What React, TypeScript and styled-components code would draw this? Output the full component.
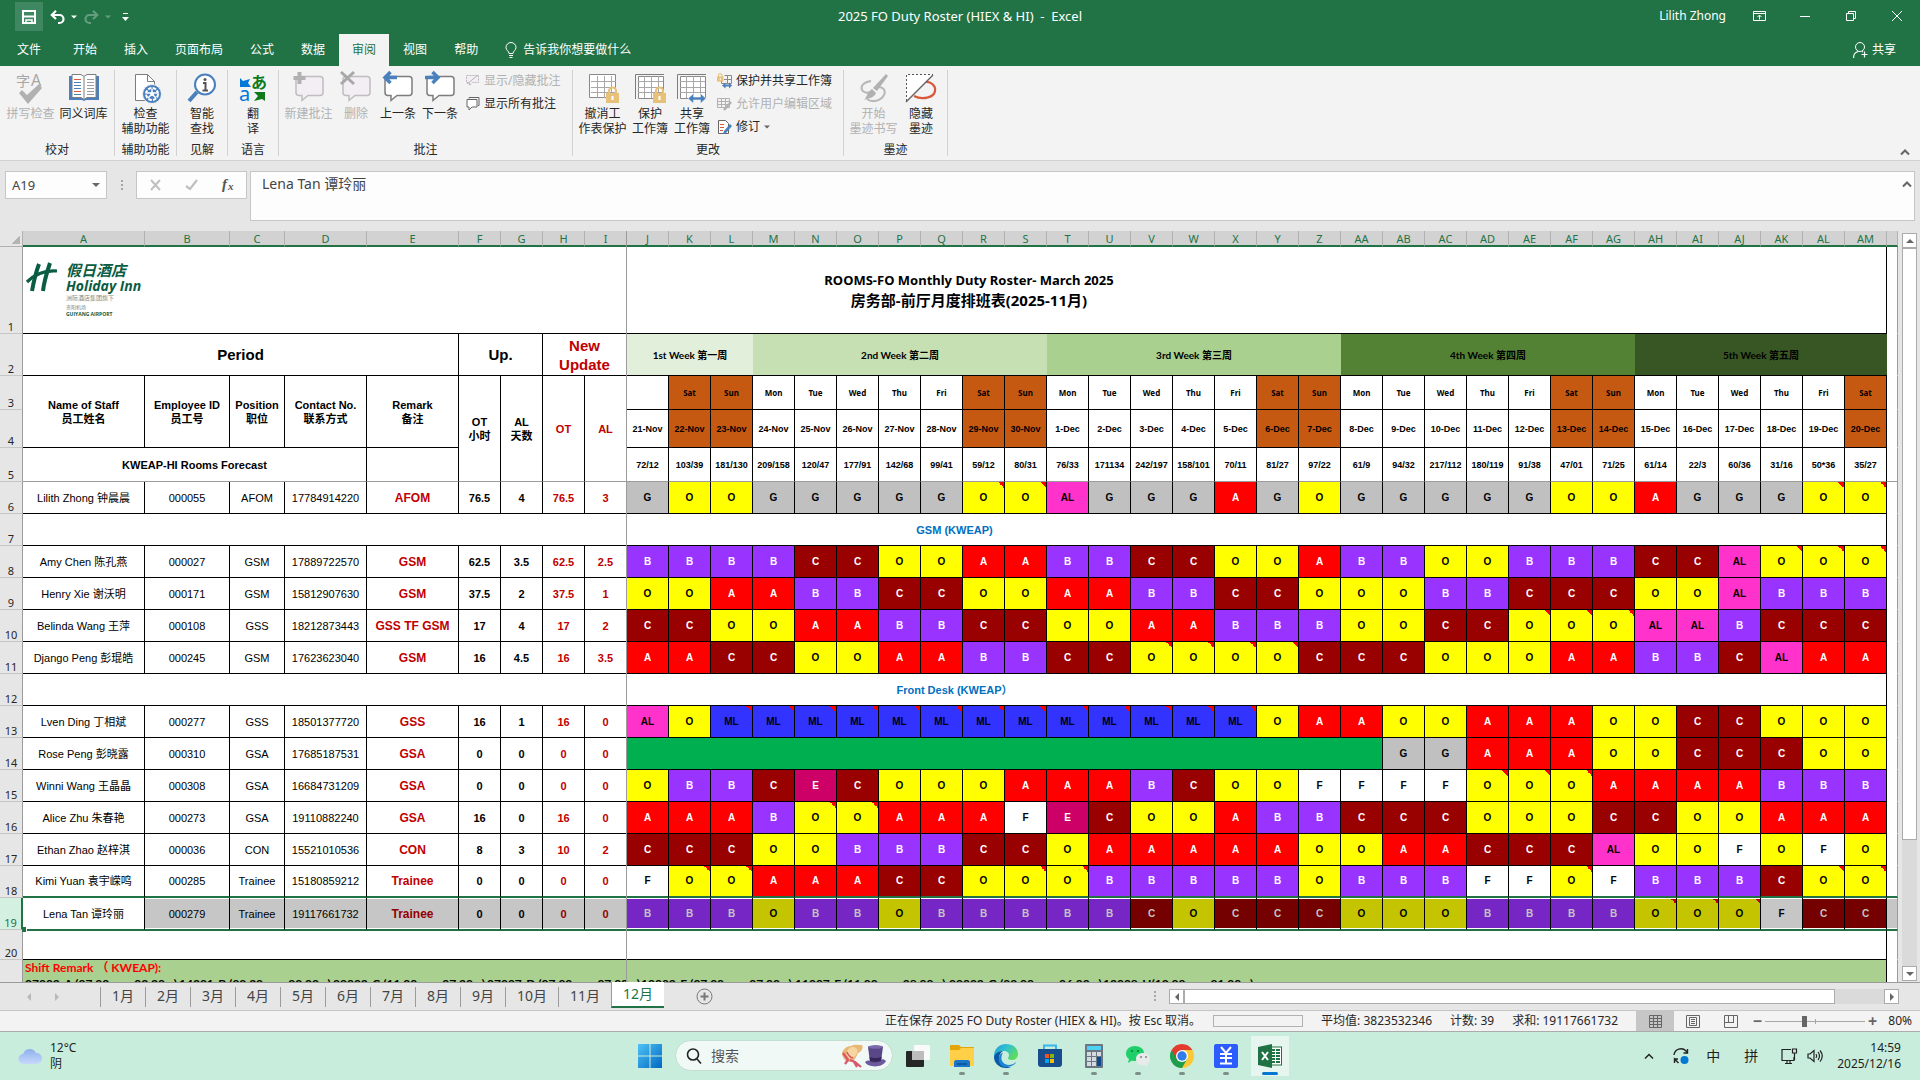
import React from "react";
import styled, { createGlobalStyle, css } from "styled-components";

const UI = `"Noto Sans", "Noto Sans CJK SC", sans-serif`;
const ARIAL = `"Liberation Sans", "Noto Sans CJK SC", sans-serif`;
const LATO = `Lato, "Noto Sans CJK SC", sans-serif`;
const GREEN = "#217346";

const Global = createGlobalStyle`
  *, *::before, *::after { box-sizing: border-box; }
  body { margin: 0; background: #e6e6e6; overflow: hidden; }
  button, input, textarea { font: inherit; color: inherit; margin: 0; padding: 0; border: 0; background: none; border-radius: 0; outline: none; }
  svg { display: block; flex: none; overflow: visible; }
`;

const Window = styled.div`
  height: 100vh;
  display: flex;
  flex-direction: column;
  font: 12px/16px ${UI};
  color: #262626;
`;

/* ---------- title bar ---------- */
const TitleBar = styled.header`
  display: grid;
  grid-template-columns: 1fr auto 1fr;
  align-items: center;
  height: 31px;
  flex: none;
  background: ${GREEN};
  color: #fff;
`;
const QuickAccess = styled.div`
  display: flex;
  align-items: center;
  padding: 2px 0 0 15px;
`;
const QuickButton = styled.button<{ $w: number; $on?: boolean; $dim?: boolean }>`
  width: ${(p) => p.$w}px;
  height: 29px;
  display: flex;
  align-items: center;
  justify-content: center;
  background: ${(p) => (p.$on ? "#3f8760" : "none")};
  opacity: ${(p) => (p.$dim ? 0.3 : 1)};
`;
const Title = styled.h1`
  margin: 0;
  font-size: 13px;
  font-weight: 400;
  white-space: pre;
`;
const WindowControls = styled.div`
  display: flex;
  justify-content: flex-end;
  align-items: center;
`;
const UserName = styled.span`
  margin-right: 10px;
`;
const CaptionButton = styled.button`
  width: 46px;
  height: 30px;
  display: flex;
  align-items: center;
  justify-content: center;
`;

/* ---------- ribbon tabs ---------- */
const TabRow = styled.nav`
  display: flex;
  align-items: flex-end;
  gap: 1px;
  height: 35px;
  flex: none;
  background: ${GREEN};
  color: #fff;
  padding-right: 24px;
`;
const Tab = styled.button<{ $active?: boolean; $first?: boolean }>`
  height: 32px;
  padding: ${(p) => (p.$first ? "0 18px 0 17px" : "0 13px")};
  background: ${(p) => (p.$active ? "#f3f3f3" : "none")};
  color: ${(p) => (p.$active ? GREEN : "#fff")};
`;
const TellMe = styled.button`
  display: flex;
  align-items: center;
  gap: 6px;
  height: 32px;
  padding-left: 13px;
`;
const Share = styled(TellMe)`
  margin-left: auto;
  gap: 4px;
`;

/* ---------- ribbon ---------- */
const Ribbon = styled.section`
  display: flex;
  height: 95px;
  flex: none;
  padding: 4px 0;
  background: #f3f3f3;
  border-bottom: 1px solid #d2d2d2;
`;
const Group = styled.div<{ $w: number }>`
  width: ${(p) => p.$w}px;
  display: flex;
  flex-direction: column;
  border-right: 1px solid #d2d2d2;
  padding-top: 2px;
`;
const GroupItems = styled.div<{ $left?: boolean }>`
  display: flex;
  justify-content: ${(p) => (p.$left ? "flex-start" : "center")};
  padding-left: ${(p) => (p.$left ? 3 : 0)}px;
`;
const GroupLabel = styled.div`
  margin-top: auto;
  text-align: center;
  line-height: 12px;
`;
const BigButton = styled.button<{ $w: number; $off?: boolean }>`
  width: ${(p) => p.$w}px;
  display: flex;
  flex-direction: column;
  align-items: center;
  justify-content: flex-start;
  gap: 2px;
  line-height: 15px;
  white-space: pre;
  color: ${(p) => (p.$off ? "#b1b1b1" : "#262626")};
`;
const SmallStack = styled.div`
  display: flex;
  flex-direction: column;
  padding: 0 0 0 4px;
  margin-top: -3px;
`;
const SmallButton = styled.button<{ $off?: boolean }>`
  display: flex;
  align-items: center;
  gap: 4px;
  height: 23px;
  white-space: nowrap;
  color: ${(p) => (p.$off ? "#b1b1b1" : "#262626")};
`;
const CollapseButton = styled.button`
  margin: auto 8px 0 auto;
  padding: 0 2px 0;
`;

/* ---------- formula bar ---------- */
const FormulaRow = styled.div`
  display: flex;
  flex: none;
  height: 70px;
  padding: 10px 5px 10px;
`;
const Boxed = styled.div<{ $w: number }>`
  width: ${(p) => p.$w}px;
  height: 28px;
  display: flex;
  align-items: center;
  background: #fdfdfd;
  border: 1px solid #c6c6c6;
  color: #444;
`;
const NameInput = styled.input`
  flex: 1;
  min-width: 0;
  padding-left: 6px;
  font-size: 13px;
`;
const NameDrop = styled.button`
  width: 14px;
`;
const Dots = styled.div`
  width: 29px;
  height: 28px;
  display: flex;
  align-items: center;
  justify-content: center;
`;
const FxButton = styled.button`
  flex: 1;
  display: flex;
  align-items: center;
  justify-content: center;
`;
const FormulaBox = styled.div`
  flex: 1;
  display: flex;
  height: 50px;
  margin-left: 3px;
  background: #fdfdfd;
  border: 1px solid #c6c6c6;
`;
const FormulaInput = styled.textarea`
  flex: 1;
  resize: none;
  padding: 3px 11px;
  font-size: 14px;
  line-height: 18px;
  color: #444;
  overflow: hidden;
`;
const FormulaToggle = styled.button`
  align-self: flex-start;
  padding: 8px 2px;
`;

/* ---------- sheet ---------- */
const SheetArea = styled.main`
  flex: 1;
  min-height: 0;
  display: flex;
`;
const SheetView = styled.div`
  flex: 1;
  min-width: 0;
  overflow: hidden;
  position: relative;
  background: #fff;
`;
const FreezeLine = styled.div`
  position: absolute;
  top: 0;
  bottom: 0;
  left: 626px;
  width: 1px;
  background: #9b9b9b;
`;
const Grid = styled.table`
  width: 100%;
  table-layout: fixed;
  border-collapse: separate;
  border-spacing: 0;
  font: 11px/14px ${ARIAL};
  color: #000;
  text-align: center;
`;
const Row = styled.tr<{ $h: number }>`
  height: ${(p) => p.$h}px;
`;
const ColHead = styled.th`
  height: 16px;
  padding: 0;
  font: 11px/13px ${UI};
  color: ${GREEN};
  background: #d2d2d2;
  border-right: 1px solid #b1b1b1;
  border-bottom: 2px solid ${GREEN};
`;
const Corner = styled.th`
  padding: 0;
  background: linear-gradient(to bottom right, transparent 50%, #b4b4b4 50%) 11px 4px / 9px 9px no-repeat #e6e6e6;
  border-right: 1px solid #b1b1b1;
  border-bottom: 1px solid #b1b1b1;
`;
const RowHead = styled.th<{ $on?: boolean }>`
  padding: 0;
  font: 11px/13px ${UI};
  vertical-align: bottom;
  color: ${(p) => (p.$on ? GREEN : "#262626")};
  background: ${(p) => (p.$on ? "#d3f0e0" : "#e6e6e6")};
  border-right: ${(p) => (p.$on ? `2px solid ${GREEN}` : "1px solid #9b9b9b")};
  border-bottom: 1px solid #c6c6c6;
`;

type CellProps = {
  $bg?: string;
  $fg?: string;
  $size?: number;
  $bold?: boolean;
  $note?: boolean;
  $line?: string;
  $lineW?: number;
  $open?: boolean;
  $picked?: boolean;
  $under?: boolean;
  $font?: string;
};
const Cell = styled.td<CellProps>`
  padding: 0;
  overflow: hidden;
  white-space: pre;
  border-right: 1px solid #000;
  border-bottom: ${(p) => p.$lineW || 1}px solid ${(p) => p.$line || "#000"};
  background-color: ${(p) => p.$bg || "#fff"};
  color: ${(p) => p.$fg || "#000"};
  font-weight: ${(p) => (p.$bold ? 700 : 400)};
  font-size: ${(p) => p.$size || 11}px;
  ${(p) => p.$font && css`font-family: ${p.$font};`}
  ${(p) => p.$open && css`border-right: 0;`}
  ${(p) => p.$under && css`border-top: 1px solid ${GREEN};`}
  ${(p) => p.$picked && css`box-shadow: inset 0 1px #fff, inset 0 -1px #fff;`}
  ${(p) =>
    p.$note &&
    css`
      background-image: linear-gradient(to bottom left, ${p.$picked ? "#c40000" : "#f00"} 50%, transparent 50%);
      background-position: top right;
      background-size: 6px 6px;
      background-repeat: no-repeat;
    `}
`;
const Filler = styled(Cell)`
  border-right: 1px solid #9b9b9b;
  border-bottom-color: ${(p) => p.$line || "transparent"};
`;
const BigHead = styled.div`
  font-size: 15px;
  line-height: 19px;
  white-space: normal;
`;
const Banner = styled.div`
  display: grid;
  grid-template-columns: 1fr auto 1fr;
  align-items: center;
  padding-left: 29px;
  height: 86px;
`;
const BannerTitle = styled.div`
  font: 700 13px/20px ${UI};
`;
const BannerSub = styled.div`
  font: 700 15px/20px ${UI};
`;
const Logo = styled.div`
  display: flex;
  gap: 8px;
  margin-left: -26px;
  color: #0a5c43;
  text-align: left;
`;
const LogoWords = styled.div`
  display: flex;
  flex-direction: column;
`;
const LogoLine = styled.span<{ $s: number; $lh: number; $grey?: boolean; $italic?: boolean; $bold?: boolean }>`
  font-family: "Open Sans", "Noto Sans CJK SC", sans-serif;
  font-size: ${(p) => p.$s}px;
  line-height: ${(p) => p.$lh}px;
  font-weight: ${(p) => (p.$bold ? 700 : 400)};
  font-style: ${(p) => (p.$italic ? "italic" : "normal")};
  color: ${(p) => (p.$grey ? "#7d8a86" : "inherit")};
`;
const Remark = styled.div`
  height: 60px;
  padding-left: 2px;
  text-align: left;
  font: 700 12px/16px ${LATO};
`;
const RemarkTitle = styled.div`
  color: #f00;
`;
const RemarkLine = styled.div`
  display: flex;
`;
const RemarkItem = styled.span`
  flex: 0 0 154px;
`;
const NameCell = styled(Cell)`
  position: relative;
  overflow: visible;
`;
const FillHandle = styled.span`
  position: absolute;
  left: -1px;
  bottom: -3px;
  width: 5px;
  height: 5px;
  background: ${GREEN};
  border-right: 1px solid #fff;
`;

/* ---------- scrollbars ---------- */
const VScroll = styled.div`
  width: 22px;
  display: flex;
  flex-direction: column;
  padding: 2px 3px 1px 4px;
`;
const HScroll = styled.div`
  flex: 0 0 730px;
  display: flex;
  height: 15px;
  margin-right: 21px;
`;
const ArrowButton = styled.button`
  flex: 0 0 15px;
  display: flex;
  align-items: center;
  justify-content: center;
  background: #fff;
  border: 1px solid #ababab;
`;
const Thumb = styled.div<{ $grow: number }>`
  flex: ${(p) => p.$grow} 1 0;
  background: #fff;
  border: 1px solid #ababab;
`;
const Track = styled.div<{ $grow: number }>`
  flex: ${(p) => p.$grow} 1 0;
  background: #dadada;
`;

/* ---------- sheet tabs ---------- */
const SheetTabs = styled.nav`
  display: flex;
  align-items: center;
  flex: none;
  height: 28px;
  border-top: 1px solid #9b9b9b;
  color: #444;
`;
const TabArrows = styled.div`
  width: 100px;
  display: flex;
  gap: 20px;
  padding-left: 25px;
`;
const SheetTab = styled.button<{ $wide?: boolean }>`
  width: ${(p) => (p.$wide ? 53 : 45)}px;
  height: 20px;
  padding-bottom: 3px;
  font-size: 14px;
  line-height: 17px;
  border-left: 1px solid #9b9b9b;
`;
const ActiveTab = styled(SheetTab)`
  height: 26px;
  margin: -4px 0 0;
  padding-bottom: 0;
  background: #fff;
  color: ${GREEN};
  border-bottom: 2px solid ${GREEN};
`;
const AddSheet = styled.button`
  margin-left: 32px;
`;
const Spacer = styled.div`
  flex: 1;
`;

/* ---------- status bar ---------- */
const StatusBar = styled.footer`
  display: flex;
  align-items: center;
  justify-content: flex-end;
  flex: none;
  height: 22px;
  background: #f3f3f3;
  border-top: 1px solid #c6c6c6;
  border-bottom: 1px solid #ababab;
  white-space: pre;
  padding-right: 8px;
`;
const Progress = styled.div`
  width: 90px;
  height: 12px;
  margin: 0 18px 0 12px;
  border: 1px solid #b1b1b1;
`;
const Stat = styled.span`
  margin-right: 18px;
`;
const ViewButton = styled.button<{ $on?: boolean }>`
  width: 38px;
  height: 20px;
  display: flex;
  align-items: center;
  justify-content: center;
  background: ${(p) => (p.$on ? "#c6c6c6" : "none")};
`;
const ZoomSign = styled.button`
  width: 15px;
  font-size: 16px;
  font-weight: 700;
  color: #666;
`;
const ZoomRange = styled.input`
  appearance: none;
  width: 100px;
  height: 13px;
  background: linear-gradient(#a6a6a6, #a6a6a6) center / 100% 1px no-repeat, linear-gradient(#a6a6a6, #a6a6a6) center / 1px 5px no-repeat;
  &::-webkit-slider-thumb {
    appearance: none;
    width: 5px;
    height: 11px;
    background: #666;
  }
`;
const ZoomLabel = styled.span`
  width: 32px;
  text-align: right;
`;

/* ---------- taskbar ---------- */
const Taskbar = styled.footer`
  display: grid;
  grid-template-columns: 1fr auto 1fr;
  align-items: center;
  flex: none;
  height: 48px;
  padding-bottom: 1px;
  background: #c9eddc;
  color: #1f1f1f;
`;
const Weather = styled.button`
  display: flex;
  align-items: center;
  gap: 7px;
  padding-left: 18px;
  text-align: left;
  justify-self: start;
`;
const Apps = styled.div`
  display: flex;
  align-items: center;
`;
const AppButton = styled.button<{ $running?: boolean; $front?: boolean }>`
  width: 44px;
  height: 47px;
  display: flex;
  align-items: center;
  justify-content: center;
  position: relative;
  ${(p) =>
    p.$front &&
    css`
      background: linear-gradient(#e6f6ee, #e6f6ee) center / 38px 40px no-repeat;
    `}
  ${(p) =>
    (p.$running || p.$front) &&
    css`
      &::after {
        content: "";
        position: absolute;
        left: 50%;
        bottom: 4px;
        width: ${p.$front ? 16 : 6}px;
        height: 3px;
        border-radius: 2px;
        transform: translateX(-50%);
        background: ${p.$front ? "#0078d4" : "#7f908a"};
      }
    `}
`;
const Search = styled.label`
  width: 218px;
  height: 31px;
  margin: 0 3px;
  padding: 0 5px 0 10px;
  display: flex;
  align-items: center;
  gap: 9px;
  background: #f0f9f5;
  border: 1px solid #c3ddd0;
  border-radius: 16px;
`;
const SearchInput = styled.input`
  flex: 1;
  min-width: 0;
  font-size: 14px;
  &::placeholder {
    color: #555;
    opacity: 1;
  }
`;
const Tray = styled.div`
  display: flex;
  align-items: center;
  justify-content: flex-end;
  padding-right: 19px;
`;
const TrayButton = styled.button<{ $w: number }>`
  width: ${(p) => p.$w}px;
  height: 30px;
  display: flex;
  align-items: center;
  justify-content: center;
  font-size: 14px;
`;
const Clock = styled.button`
  text-align: right;
  margin-left: 12px;
`;

/* ---------- data ---------- */
const columns = [
  ..."ABCDEFGHIJKLMNOPQRSTUVWXYZ".split(""),
  ..."ABCDEFGHIJKLM".split("").map((c) => "A" + c),
];
const leadWidths = [122, 85, 55, 82, 92, 42, 42, 42, 42];

const weeks: [string, number, string][] = [
  ["1st Week 第一周", 3, "#e2efda"],
  ["2nd Week 第二周", 7, "#c6e0b4"],
  ["3rd Week 第三周", 7, "#a9d08e"],
  ["4th Week 第四周", 7, "#548235"],
  ["5th Week 第五周", 6, "#375623"],
];
const weekDays = ["Fri", "Sat", "Sun", "Mon", "Tue", "Wed", "Thu"];
const days = Array.from({ length: 30 }, (_, i) => ({
  day: i === 0 ? "" : weekDays[i % 7],
  date: i < 10 ? `${21 + i}-Nov` : `${i - 9}-Dec`,
  weekend: i % 7 === 1 || i % 7 === 2,
}));
const forecast =
  "72/12 103/39 181/130 209/158 120/47 177/91 142/68 99/41 59/12 80/31 76/33 171134 242/197 158/101 70/11 81/27 97/22 61/9 94/32 217/112 180/119 91/38 47/01 71/25 61/14 22/3 60/36 31/16 50*36 35/27".split(" ");

type Staff = { row: number; info: string[]; shifts: string; leave?: number };
type Section = { row: number; section: string };
const roster: (Staff | Section)[] = [
  { row: 6, info: ["Lilith Zhong 钟晨晨", "000055", "AFOM", "17784914220", "AFOM", "76.5", "4", "76.5", "3"],
    shifts: "G O O G G G G G O* O* AL G G G A G O G G G G G O O A G G G O* O*" },
  { row: 7, section: "GSM (KWEAP)" },
  { row: 8, info: ["Amy Chen 陈孔燕", "000027", "GSM", "17889722570", "GSM", "62.5", "3.5", "62.5", "2.5"],
    shifts: "B B B B C C O O A A B B C C O O A B B O O B B B C C AL O* O* O*" },
  { row: 9, info: ["Henry Xie 谢沃明", "000171", "GSM", "15812907630", "GSM", "37.5", "2", "37.5", "1"],
    shifts: "O O A A B B C C O O A A B B C C O O O B B C C C O O AL B B B" },
  { row: 10, info: ["Belinda Wang 王萍", "000108", "GSS", "18212873443", "GSS TF GSM", "17", "4", "17", "2"],
    shifts: "C C O O A A B B C C O O A A B B B O O C C O* O* O* AL AL B C C C" },
  { row: 11, info: ["Django Peng 彭琨皓", "000245", "GSM", "17623623040", "GSM", "16", "4.5", "16", "3.5"],
    shifts: "A A C C O O A A B B C C O* O* O* O* C C C O O O A A B B C AL A A" },
  { row: 12, section: "Front Desk (KWEAP）" },
  { row: 13, info: ["Lven Ding 丁相斌", "000277", "GSS", "18501377720", "GSS", "16", "1", "16", "0"],
    shifts: "AL O ML* ML* ML* ML* ML* ML* ML* ML* ML* ML* ML* ML* ML* O A A O O A A A O O C C O O O" },
  { row: 14, info: ["Rose Peng 彭晓露", "000310", "GSA", "17685187531", "GSA", "0", "0", "0", "0"], leave: 18,
    shifts: "G G A A A O O C C C O O" },
  { row: 15, info: ["Winni Wang 王晶晶", "000308", "GSA", "16684731209", "GSA", "0", "0", "0", "0"],
    shifts: "O B B C E C O O O A A A B C O O F F F F O* O* O* A A A A B B B" },
  { row: 16, info: ["Alice Zhu 朱春艳", "000273", "GSA", "19110882240", "GSA", "16", "0", "16", "0"],
    shifts: "A A A B O* O* A A A F E C O O A B B C C C O O O C C O O A A A" },
  { row: 17, info: ["Ethan Zhao 赵梓淇", "000036", "CON", "15521010536", "CON", "8", "3", "10", "2"],
    shifts: "C C C O O B B B C C O A A A A A O O A A C C C AL O O F O F O" },
  { row: 18, info: ["Kimi Yuan 袁宇嵘鸣", "000285", "Trainee", "15180859212", "Trainee", "0", "0", "0", "0"],
    shifts: "F O* O* A A A C C O O* O* B B B B B O B B B F F O* F B B B C O* O*" },
  { row: 19, info: ["Lena Tan 谭玲丽", "000279", "Trainee", "19117661732", "Trainee", "0", "0", "0", "0"],
    shifts: "B B B O B B O B B B B B C O C C C O O O B B B B O* O* O* F C C" },
];
const shiftColors: Record<string, [string, string, string, string]> = {
  G: ["#c0c0c0", "#000", "#939393", "#000"],
  O: ["#ffff00", "#000", "#c4c400", "#000"],
  B: ["#9933ff", "#fff", "#7526c4", "#c4c4c4"],
  C: ["#990000", "#fff", "#740000", "#c4c4c4"],
  A: ["#ff0000", "#fff", "#c40000", "#c4c4c4"],
  E: ["#cc0066", "#fff", "#9c004e", "#c4c4c4"],
  F: ["#ffffff", "#000", "#c6c6c6", "#000"],
  AL: ["#ff33cc", "#000", "#c4279d", "#000"],
  ML: ["#3333ff", "#000", "#2727c4", "#000"],
};
const remarks = ["07003-A (07.00", "14301-B (02.30", "22003-C (11.00", "07007-D (07.00", "10003-E (07.00", "11007-F (11.00", "22003-G (22.00", "13008-H(12.00"];
const remarkEnds = ["03.30", "22.00", "07.30", "07.00", "07.00", "08.00", "06.00", "21.00"];

/* ---------- icons ---------- */
const Tri = ({ d, c = "#666", s = 8 }: { d: "up" | "down" | "left" | "right"; c?: string; s?: number }) => {
  const pts = { up: "0,6 8,6 4,2", down: "0,2 8,2 4,6", left: "6,0 6,8 2,4", right: "2,0 2,8 6,4" }[d];
  return <svg width={s} height={s} viewBox="0 0 8 8"><polygon points={pts} fill={c} /></svg>;
};
const ChevronUp = ({ c = "#666", w = 2 }: { c?: string; w?: number }) => (
  <svg width="10" height="8" viewBox="0 0 10 8"><path d="M1 6.500 5 2.500 9 6.500" fill="none" stroke={c} strokeWidth={w} /></svg>
);
const SaveIcon = () => (
  <svg width="14" height="16" viewBox="0 0 14 16" fill="none" stroke="#fff" strokeWidth="2"><path d="M1 2h12v12H1z" /><path d="M1 7.500h12" /><path d="M4 15v-4h6v4" strokeWidth="1.500" /><path d="M6 13v2" strokeWidth="1.500" /></svg>
);
const UndoIcon = ({ flip }: { flip?: boolean }) => (
  <svg width="15" height="14" viewBox="0 0 15 14" fill="none" stroke="#fff" strokeWidth="2.200" transform={flip ? "scale(-1 1)" : undefined}><path d="M6 .8 1.800 5 6 9M2 5h7.500a4 4 0 0 1 0 8H8" /></svg>
);
const SpellIcon = () => (
  <svg width="32" height="32" viewBox="0 0 32 32" fill="#a6a6a6"><text x="1" y="14" fontSize="14" fontFamily="Noto Sans CJK SC">字</text><text x="16" y="14" fontSize="16" fontFamily="Noto Sans">A</text><path d="m4 21 3-3 5 5L24 12l3 4-14 16z" fill="#b1b1b1" /></svg>
);
const ThesaurusIcon = () => (
  <svg width="32" height="32" viewBox="0 0 32 32" fill="none"><path d="M1 4h3v21h12 12V4h3v24H18l-2 1-2-1H1z" fill="#4a80bd" /><path d="M4 2.500h9l3 2 3-2h9v23h-9l-3 2-3-2H4z" fill="#fff" stroke="#7d7d7d" /><path d="M16 5v22" stroke="#7d7d7d" /><path d="M6 7.500h7M6 19.500h7" stroke="#d8583a" /><path d="M6 10.500h7M6 13.500h7M6 16.500h7M6 22.500h7" stroke="#4a80bd" /><path d="M19 7.500h7M19 10.500h7M19 13.500h7M19 16.500h7M19 19.500h7M19 22.500h7" stroke="#9b9b9b" /></svg>
);
const AccessIcon = () => (
  <svg width="32" height="32" viewBox="0 0 32 32" fill="none"><path d="M5.500 2.500h12l7 7v19h-19z" fill="#fff" stroke="#7d7d7d" /><path d="M17.500 2.500v7h7" stroke="#7d7d7d" /><circle cx="22" cy="22" r="9.500" fill="#4a80bd" stroke="#f3f3f3" /><circle cx="22" cy="22" r="6" stroke="#fff" strokeWidth="2" strokeDasharray="3.500 1.200" /><path d="M22 17v3M22 22l-4 4M22 22l4 4M17 21h10" stroke="#fff" strokeWidth="1.500" /><circle cx="22" cy="22" r="2" fill="#fff" /></svg>
);
const SmartIcon = () => (
  <svg width="32" height="32" viewBox="0 0 32 32" fill="none"><path d="M3 29 11 20" stroke="#4a80bd" strokeWidth="4" /><circle cx="19" cy="12.500" r="10" fill="#fff" stroke="#4a80bd" strokeWidth="2" /><circle cx="19" cy="7.500" r="1.500" fill="#555" /><path d="M17 11h2.500v7M16.500 18.500h5.500" stroke="#555" strokeWidth="2" /></svg>
);
const TranslateIcon = () => (
  <svg width="32" height="32" viewBox="0 0 32 32"><text x="14" y="16" fontSize="16" fontWeight="700" fill="#0e7a1a" fontFamily="Noto Sans CJK SC">あ</text><text x="2" y="29" fontSize="20" fill="#0078d7" fontFamily="Noto Sans">a</text><path d="M3 6v9h11l-3-4 2-4-7 2z" fill="#0078d7" /><path d="M28 29v-9H17l4 4-4 5 8-2z" fill="#0e7a1a" /></svg>
);
const CommentIcon = ({ mark }: { mark: "plus" | "x" | "left" | "right" }) => {
  const off = mark === "plus" || mark === "x";
  return (
    <svg width="32" height="32" viewBox="0 0 32 32" fill="none">
      <path d="M6 4.500h21a3 3 0 0 1 3 3v13a3 3 0 0 1-3 3H15l-6 5v-5H6a3 3 0 0 1-3-3v-13a3 3 0 0 1 3-3z" fill={off ? "#f3eef3" : "#fff"} stroke={off ? "#c0bcc0" : "#7d7d7d"} strokeWidth="1.500" />
      {mark === "plus" && <path d="M6.500 0v12M.5 6h12" stroke="#b1b1b1" strokeWidth="4" />}
      {mark === "x" && <path d="m1 0 13 12M14 0 1 12" stroke="#a8a8a8" strokeWidth="3" />}
      {mark === "left" && <path d="M8.500 0 3 5.500 8.500 11M3 5.500h12" stroke="#4a80bd" strokeWidth="3.500" />}
      {mark === "right" && <path d="M8.500 0 14 5.500 8.500 11M1 5.500h12" stroke="#4a80bd" strokeWidth="3.500" />}
    </svg>
  );
};
const NoteSmall = ({ off }: { off?: boolean }) => (
  <svg width="15" height="15" viewBox="0 0 15 15" fill="none" stroke={off ? "#b8b4b8" : "#666"}>
    {off ? <><path d="M1.500 2.500h12v7h-6l-3 3v-3h-3z" strokeDasharray="2 1" fill="#f3eef3" /><path d="m2 11 11-9" /></> : <><path d="M4 2.500V1.500h10v8h-1" /><path d="M2 3.500h10v7.500H7l-3 3v-3H2z" fill="#fff" /></>}
  </svg>
);
const Lock = ({ x, y, s = 1 }: { x: number; y: number; s?: number }) => (
  <g transform={`translate(${x} ${y}) scale(${s})`}><path d="M3 8V5a3.500 3.500 0 0 1 7 0v3" fill="none" stroke="#e8c178" strokeWidth="2.200" /><rect x="0" y="7" width="13" height="10" fill="#e8c178" /><path d="M6.500 10v4" stroke="#fff" strokeWidth="2" /></g>
);
const SheetIcon = ({ kind }: { kind: "sheet" | "book" | "share" }) => (
  <svg width="32" height="32" viewBox="0 0 32 32" fill="none">
    {kind !== "sheet" && <path d="M1.500 27V2.500H30" stroke="#7d7d7d" />}
    <path d={kind === "sheet" ? "M2.500 2.500h26v23h-26z" : "M4.500 4.500h25v22h-25z"} fill="#fff" stroke="#8a8a8a" /><path d="M10.500 4v22M17.500 4v22M24.500 4v22M4 9.500h25M4 15.500h25M4 20.500h25" stroke="#a8a8a8" />
    {kind === "share" ? <path d="M12 26.500l5.500-5v3.500h7v-3.500l5.500 5-5.500 5V28h-7v3.500z" fill="#4a80bd" stroke="#f3f3f3" strokeWidth=".6" /> : <Lock x={19} y={14} />}
  </svg>
);
const ProtectShareIcon = () => (
  <svg width="15" height="16" viewBox="0 0 15 16" fill="none"><path d="M7.500 2.500h7v8h-10v-3M10.500 2v8M7 6.500h7.500" stroke="#8a8a8a" /><Lock x={0} y={0} s={0.5} /><path d="M5 12.500l3.500-3v2H12v-2l3 3-3 3v-2H8.500v2z" fill="#4a80bd" /></svg>
);
const RangeIcon = () => (
  <svg width="15" height="16" viewBox="0 0 15 16" fill="none" stroke="#b1b1b1"><path d="M.5 2.500h12v9H.5zM4.500 2v9M8.500 2v9M0 5.500h13M0 8.500h13" /><path d="m7 14 7-8" strokeWidth="2.500" /></svg>
);
const TrackIcon = () => (
  <svg width="15" height="16" viewBox="0 0 15 16" fill="none"><path d="M1.500 1.500h7l3 3v10h-10z" fill="#fff" stroke="#666" /><path d="M3 5.500h4M3 8.500h4M3 11.500h3" stroke="#d8583a" /><path d="m6 15 1-3 6-7 2 2-6 7z" fill="#4a80bd" /></svg>
);
const InkIcon = () => (
  <svg width="32" height="32" viewBox="0 0 32 32" fill="none"><path d="M13 9C6 10 2 14 4 18c2 3 6 3 9 2M20 15c6 0 8 4 6 8-3 6-12 8-17 4" stroke="#b8b8b8" strokeWidth="2" /><path d="m28 2 2 2-11 15-4-3z" fill="#b1b1b1" /><path d="m14 17 4 4c-2 5-7 5-12 7 3-3 3-8 8-11z" fill="#b1b1b1" /></svg>
);
const HideInkIcon = () => (
  <svg width="32" height="32" viewBox="0 0 32 32" fill="none"><path d="M20 10c6-1 11 4 10 9-1 7-13 9-21 5" stroke="#d8583a" strokeWidth="2.200" /><path d="M1.500 29V2.500H28z" fill="#fff" /><path d="M1.500 29V2.500H28" stroke="#555" strokeDasharray="2 2" /><path d="M1 30 28 3" stroke="#666" strokeWidth="1.500" /></svg>
);
const Win = () => (
  <svg width="24" height="24" viewBox="0 0 24 24"><defs><linearGradient id="win" x1="0" y1="0" x2="1" y2="1"><stop offset="0" stopColor="#4fc3f7" /><stop offset="1" stopColor="#0067c0" /></linearGradient></defs><path d="M0 0h11.500v11.500H0zM12.500 0H24v11.500H12.500zM0 12.500h11.500V24H0zM12.500 12.500H24V24H12.500z" fill="url(#win)" /></svg>
);
const HatsIcon = () => (
  <svg width="46" height="26" viewBox="0 0 46 26" fill="none"><path d="M2 14c-3-5 2-11 8-11 3-2 8-1 11-1 2 3-1 7-4 8-2 4-3 8-8 9-3 0-6-2-7-5z" fill="#e9b877" /><path d="M6 12c-1-6 5-10 9-7 3 2 1 7-2 9-3 1-6 1-7-2z" fill="#f6d6a0" /><path d="M2 10l5 7-3 4M9 17l5 2 6 5M13 19l3 5" stroke="#d9556b" strokeWidth="2.200" /><path d="M6 9c1 3 3 5 6 6" stroke="#d9556b" strokeWidth="1.500" /><path d="M24 19c3 6 18 6 21-1-2-2-4-2-5-1l-11 1c-1-1-4 0-5 1z" fill="#6d5a9e" /><path d="M27 4c3-2 13-2 15 0l-2 14c-2 2-9 2-11 1z" fill="#5a4788" /><ellipse cx="34.500" cy="4" rx="7.500" ry="1.800" fill="#7a68ac" /><path d="m28.500 14 .6 4c3 1 8.500 1 11-.6l.6-4c-3 2-8.500 2-12.200.6z" fill="#352659" /></svg>
);
const TaskViewIcon = () => (
  <svg width="24" height="24" viewBox="0 0 24 24"><rect x="8" y="1" width="16" height="15" rx="1" fill="#fafafa" /><rect x="0" y="7" width="18" height="16" rx="1" fill="#262626" /><rect x="6" y="7" width="12" height="9" fill="#bdbdbd" /></svg>
);
const FolderIcon = () => (
  <svg width="24" height="24" viewBox="0 0 24 24"><path d="M0 2c0-1 .5-1 1-1h8l2 2H23c1 0 1 .5 1 1v17H0z" fill="#e5a50a" /><path d="M0 6h9l2-2h13v18H0z" fill="#ffcf48" /><path d="M4 23v-5c0-1 1-2 2-2h12c1 0 2 1 2 2v5z" fill="#1976c8" /><path d="M7 20h10" stroke="#0b4f94" strokeWidth="1.500" /></svg>
);
const EdgeIcon = () => (
  <svg width="24" height="24" viewBox="0 0 24 24"><defs><linearGradient id="edge" x1="0" y1="0" x2="1" y2=".6"><stop offset="0" stopColor="#2196d8" /><stop offset=".5" stopColor="#30c3d0" /><stop offset="1" stopColor="#5fdc5a" /></linearGradient></defs><path d="M0 12C0 5 5 0 12 0s12 4 12 10c0 4-3 6-6 6-3 0-4-1-4-2s1-1 1-3c0-2-2-4-5-4-5 0-9 3-10 8z" fill="url(#edge)" /><path d="M0 13c1-4 5-6 9-6-2 1-4 4-4 7 0 6 5 9 10 9h2c-2 1-4 1-5 1C5 24 0 19 0 13z" fill="#0c59a4" /><path d="M9 9c-3 4-2 11 5 12 4 0 6-1 8-3 0 2-5 5-9 5C6 23 4 18 5 14c0-3 2-5 4-5z" fill="#1a86d4" /></svg>
);
const StoreIcon = () => (
  <svg width="24" height="24" viewBox="0 0 24 24" fill="none"><path d="M6 7V1.500h12V7" stroke="#36b8ee" strokeWidth="2" /><path d="M0 5h24v15c0 2-1 3-3 3H3c-2 0-3-1-3-3z" fill="#174d8c" /><path d="M7 10h4v4H7z" fill="#f25022" /><path d="M12 10h4v4h-4z" fill="#7fba00" /><path d="M7 15h4v4H7z" fill="#00a4ef" /><path d="M12 15h4v4h-4z" fill="#ffb900" /></svg>
);
const CalcIcon = () => (
  <svg width="18" height="24" viewBox="0 0 18 24"><rect width="18" height="24" rx="1" fill="#6b7680" /><rect x="2" y="2" width="14" height="4" fill="#4dd2f5" /><path d="M2 8h4v4H2zM7 8h4v4H7zM12 8h4v4h-4zM2 13h4v4H2zM7 13h4v4H7zM2 18h4v4H2zM7 18h4v4H7z" fill="#d3dae0" /><path d="M12 13h4v9h-4z" fill="#0c4a8f" /></svg>
);
const WeChatIcon = () => (
  <svg width="24" height="24" viewBox="0 0 24 24"><path d="M9 2c5 0 9 3 9 7s-4 8-9 8c-1 0-2 0-3-.5L2 19l1-4C1 14 0 12 0 9.500 0 5 4 2 9 2z" fill="#1fd06a" /><path d="M17 9c4 0 7 3 7 6 0 2-1 4-3 5l1 3-3-2c-5 1-9-2-9-6s3-6 7-6z" fill="#e9ebea" /><circle cx="6" cy="7" r="1.100" fill="#0b7c3c" /><circle cx="12" cy="7" r="1.100" fill="#0b7c3c" /><circle cx="15" cy="13" r="1" fill="#7e8583" /><circle cx="20" cy="13" r="1" fill="#7e8583" /></svg>
);
const ChromeIcon = () => (
  <svg width="24" height="24" viewBox="0 0 24 24"><path d="M12 12 1.600 6A12 12 0 0 1 22.400 6z" fill="#e33b2e" /><path d="M12 12 22.400 6A12 12 0 0 1 12 24z" fill="#fcc934" /><path d="M12 12 12 24A12 12 0 0 1 1.600 6z" fill="#1e9e4a" /><path d="M12 6h10.400L17 15z" fill="#fcc934" /><path d="M6.800 15 1.600 6 12 6z" fill="#e33b2e" /><path d="m6.800 15 10.400 0L12 24z" fill="#1e9e4a" /><circle cx="12" cy="12" r="6" fill="#fff" /><circle cx="12" cy="12" r="4.700" fill="#2f7de9" /></svg>
);
const YenIcon = () => (
  <svg width="24" height="24" viewBox="0 0 24 24" fill="none" stroke="#fff" strokeWidth="2"><rect width="24" height="24" rx="2" fill="#2c5cff" stroke="none" /><path d="m7 3 5 6 5-6M6 10h12M6 14h12M12 9v11M6 19.500h12" /></svg>
);
const ExcelIcon = () => (
  <svg width="24" height="24" viewBox="0 0 24 24"><rect x="11" y="3" width="12.500" height="18" fill="#fff" stroke="#1f7244" /><path d="M14 6h3M18 6h4M14 9h3M18 9h4M14 12h3M18 12h4M14 15h3M18 15h4M14 18h3M18 18h4" stroke="#1f7244" strokeWidth="2" /><path d="M0 3 14 0v24L0 21z" fill="#1f7244" /><path d="m4 8 6 8M10 8l-6 8" stroke="#fff" strokeWidth="2" /></svg>
);
const LogoMark = () => (
  <svg width="32" height="30" viewBox="0 0 32 30" fill="none" stroke="#0a5c43"><path d="M13 2C10 10 8 18 6 29M24 1c-3 9-6 18-7 28" strokeWidth="4" /><path d="M1 20c8-8 18-12 30-11" strokeWidth="3.200" /></svg>
);

/* ---------- roster rows ---------- */
const StaffRow = ({ s }: { s: Staff }) => {
  const picked = s.row === 19;
  const line = picked || s.row === 18 ? GREEN : undefined;
  const lineW = s.row === 18 ? 2 : 1;
  return (
    <Row $h={32}>
      <RowHead scope="row" $on={picked}>{s.row}</RowHead>
      {s.info.map((t, i) => {
        const shared = { $line: line, $lineW: lineW, $picked: picked };
        if (i === 0)
          return (
            <NameCell key={i} {...shared}>
              {t}
              {picked && <FillHandle />}
            </NameCell>
          );
        const red = i === 4 || i > 6;
        return (
          <Cell key={i} {...shared} $bg={picked ? "#c6c6c6" : undefined} $bold={i > 3} $size={i === 4 ? 12 : 11} $fg={red ? (picked ? "#940000" : "#c00000") : undefined}>
            {t}
          </Cell>
        );
      })}
      {s.leave && <Cell colSpan={s.leave} $bg="#00b050" />}
      {s.shifts.split(" ").map((code, i) => {
        const k = code.replace("*", "");
        const c = shiftColors[k];
        return (
          <Cell key={i} $bold $size={10} $line={line} $lineW={lineW} $picked={picked} $note={code.endsWith("*")} $bg={picked ? c[2] : c[0]} $fg={picked ? c[3] : c[1]}>
            {k}
          </Cell>
        );
      })}
      <Filler $line={line} $lineW={lineW} $picked={picked} $bg={picked ? "#c6c6c6" : undefined} />
    </Row>
  );
};

const Sheet = () => (
  <SheetView>
    <Grid>
      <colgroup>
        <col width={23} />
        {leadWidths.map((w, i) => <col key={i} width={w} />)}
        {days.map((_, i) => <col key={i} width={42} />)}
        <col />
      </colgroup>
      <thead>
        <tr>
          <Corner />
          {columns.map((c) => <ColHead key={c} scope="col">{c}</ColHead>)}
          <ColHead />
        </tr>
      </thead>
      <tbody>
        <Row $h={87}>
          <RowHead scope="row">1</RowHead>
          <Cell colSpan={39}>
            <Banner>
              <Logo>
                <LogoMark />
                <LogoWords>
                  <LogoLine $s={15} $lh={16} $bold $italic>假日酒店</LogoLine>
                  <LogoLine $s={14} $lh={16} $bold $italic>Holiday Inn</LogoLine>
                  <LogoLine $s={6} $lh={9} $grey>洲际酒店集团旗下</LogoLine>
                  <LogoLine $s={5} $lh={8} $grey>贵阳机场</LogoLine>
                  <LogoLine $s={5} $lh={7} $bold>GUIYANG AIRPORT</LogoLine>
                </LogoWords>
              </Logo>
              <div>
                <BannerTitle>ROOMS-FO Monthly Duty Roster- March 2025</BannerTitle>
                <BannerSub>房务部-前厅月度排班表(2025-11月)</BannerSub>
              </div>
            </Banner>
          </Cell>
          <Filler />
        </Row>
        <Row $h={42}>
          <RowHead scope="row">2</RowHead>
          <Cell colSpan={5} $bold><BigHead>Period</BigHead></Cell>
          <Cell colSpan={2} $bold><BigHead>Up.</BigHead></Cell>
          <Cell colSpan={2} $bold $fg="#c00000"><BigHead>New Update</BigHead></Cell>
          {weeks.map(([t, n, bg]) => <Cell key={t} colSpan={n} $bg={bg} $bold $open $size={10} $font={LATO}>{t}</Cell>)}
          <Filler />
        </Row>
        <Row $h={34}>
          <RowHead scope="row">3</RowHead>
          {["Name of Staff\n员工姓名", "Employee ID\n员工号", "Position\n职位", "Contact No.\n联系方式", "Remark\n备注"].map((t) => (
            <Cell key={t} rowSpan={2} $bold>{t}</Cell>
          ))}
          {["OT\n小时", "AL\n天数"].map((t) => <Cell key={t} rowSpan={3} $bold $line="#9b9b9b">{t}</Cell>)}
          {["OT", "AL"].map((t) => <Cell key={t} rowSpan={3} $bold $fg="#c00000" $line="#9b9b9b">{t}</Cell>)}
          {days.map((d, i) => <Cell key={i} $bold $size={8} $font={UI} $bg={d.weekend ? "#c65911" : undefined}>{d.day}</Cell>)}
          <Filler />
        </Row>
        <Row $h={38}>
          <RowHead scope="row">4</RowHead>
          {days.map((d, i) => <Cell key={i} $bold $size={9} $bg={d.weekend ? "#c65911" : undefined}>{d.date}</Cell>)}
          <Filler />
        </Row>
        <Row $h={34}>
          <RowHead scope="row">5</RowHead>
          <Cell colSpan={4} $bold $line="#9b9b9b">KWEAP-HI Rooms Forecast</Cell>
          <Cell $line="#9b9b9b" />
          {forecast.map((t, i) => <Cell key={i} $bold $size={9} $line="#9b9b9b">{t}</Cell>)}
          <Filler $line="#9b9b9b" />
        </Row>
        {roster.map((r) =>
          "section" in r ? (
            <Row key={r.row} $h={32}>
              <RowHead scope="row">{r.row}</RowHead>
              <Cell colSpan={39} $bold $fg="#0070c0">{r.section}</Cell>
              <Filler />
            </Row>
          ) : (
            <StaffRow key={r.row} s={r} />
          )
        )}
        <Row $h={30}>
          <RowHead scope="row">20</RowHead>
          <Cell colSpan={39} $under />
          <Filler $under />
        </Row>
        <tr>
          <RowHead />
          <Cell colSpan={39} $bg="#a9d08e">
            <Remark>
              <RemarkTitle>Shift Remark （ KWEAP):</RemarkTitle>
              <RemarkLine>
                {remarks.map((t, i) => <RemarkItem key={i}>{`${t}  ---  ${remarkEnds[i]}   )`}</RemarkItem>)}
              </RemarkLine>
            </Remark>
          </Cell>
          <Filler />
        </tr>
      </tbody>
    </Grid>
    <FreezeLine />
  </SheetView>
);

const months = Array.from({ length: 11 }, (_, i) => i + 1);

export default function App() {
  return (
    <Window>
      <Global />
      <TitleBar>
        <QuickAccess>
          <QuickButton $w={28} $on aria-label="保存"><SaveIcon /></QuickButton>
          <QuickButton $w={28} aria-label="撤消"><UndoIcon /></QuickButton>
          <QuickButton $w={6} aria-label="撤消列表"><Tri d="down" c="#fff" s={6} /></QuickButton>
          <QuickButton $w={28} $dim aria-label="恢复"><UndoIcon flip /></QuickButton>
          <QuickButton $w={6} $dim aria-label="恢复列表"><Tri d="down" c="#fff" s={6} /></QuickButton>
          <QuickButton $w={28} aria-label="自定义">
            <svg width="7" height="8" viewBox="0 0 7 8"><path d="M1 .5h5" stroke="#fff" /><path d="M0 4h7L3.500 8z" fill="#fff" /></svg>
          </QuickButton>
        </QuickAccess>
        <Title>2025 FO Duty Roster (HIEX &amp; HI)  -  Excel</Title>
        <WindowControls>
          <UserName>Lilith Zhong</UserName>
          <CaptionButton aria-label="功能区显示选项"><svg width="13" height="10" viewBox="0 0 13 10" fill="none" stroke="#fff"><path d="M.5.5h12v9H.5zM0 2.500h13M6.500 8.500v-4M4.500 6l2-2 2 2" /></svg></CaptionButton>
          <CaptionButton aria-label="最小化"><svg width="10" height="10" viewBox="0 0 10 10" stroke="#fff"><path d="M0 5.500h10" /></svg></CaptionButton>
          <CaptionButton aria-label="还原"><svg width="10" height="10" viewBox="0 0 10 10" fill="none" stroke="#fff"><path d="M.5 2.500h7v7h-7zM2.500 2.500v-2h7v7h-2" /></svg></CaptionButton>
          <CaptionButton aria-label="关闭"><svg width="10" height="10" viewBox="0 0 10 10" stroke="#fff"><path d="m0 0 10 10M10 0 0 10" /></svg></CaptionButton>
        </WindowControls>
      </TitleBar>
      <TabRow>
        {["文件", "开始", "插入", "页面布局", "公式", "数据", "审阅", "视图", "帮助"].map((t, i) => (
          <Tab key={t} $active={t === "审阅"} $first={i === 0}>{t}</Tab>
        ))}
        <TellMe>
          <svg width="12" height="16" viewBox="0 0 12 16" fill="none" stroke="#fff"><path d="M4 11.500C4 9 1 8.500 1 5.500a5 5 0 0 1 10 0c0 3-3 3.500-3 6zM4 13.500h4M4.500 15.500h3" /></svg>
          告诉我你想要做什么
        </TellMe>
        <Share>
          <svg width="15" height="16" viewBox="0 0 15 16" fill="none" stroke="#fff"><circle cx="7" cy="5" r="4.500" /><path d="M.5 16c0-4 2-6 5-6.500M9 9.500l1 .5M11.500 9.500v6M8.500 12.500h6" strokeWidth="1.200" /></svg>
          共享
        </Share>
      </TabRow>
      <Ribbon>
        <Group $w={115}>
          <GroupItems>
            <BigButton $w={53} $off><SpellIcon />拼写检查</BigButton>
            <BigButton $w={53}><ThesaurusIcon />同义词库</BigButton>
          </GroupItems>
          <GroupLabel>校对</GroupLabel>
        </Group>
        <Group $w={62}>
          <GroupItems><BigButton $w={53}><AccessIcon />{"检查\n辅助功能"}</BigButton></GroupItems>
          <GroupLabel>辅助功能</GroupLabel>
        </Group>
        <Group $w={51}>
          <GroupItems><BigButton $w={42}><SmartIcon />{"智能\n查找"}</BigButton></GroupItems>
          <GroupLabel>见解</GroupLabel>
        </Group>
        <Group $w={51}>
          <GroupItems><BigButton $w={42}><TranslateIcon />{"翻\n译"}</BigButton></GroupItems>
          <GroupLabel>语言</GroupLabel>
        </Group>
        <Group $w={294}>
          <GroupItems $left>
            <BigButton $w={53} $off><CommentIcon mark="plus" />新建批注</BigButton>
            <BigButton $w={42} $off><CommentIcon mark="x" />删除</BigButton>
            <BigButton $w={42}><CommentIcon mark="left" />上一条</BigButton>
            <BigButton $w={42}><CommentIcon mark="right" />下一条</BigButton>
            <SmallStack>
              <SmallButton $off><NoteSmall off />显示/隐藏批注</SmallButton>
              <SmallButton><NoteSmall />显示所有批注</SmallButton>
            </SmallStack>
          </GroupItems>
          <GroupLabel>批注</GroupLabel>
        </Group>
        <Group $w={271}>
          <GroupItems $left>
            <BigButton $w={53}><SheetIcon kind="sheet" />{"撤消工\n作表保护"}</BigButton>
            <BigButton $w={42}><SheetIcon kind="book" />{"保护\n工作簿"}</BigButton>
            <BigButton $w={42}><SheetIcon kind="share" />{"共享\n工作簿"}</BigButton>
            <SmallStack>
              <SmallButton><ProtectShareIcon />保护并共享工作簿</SmallButton>
              <SmallButton $off><RangeIcon />允许用户编辑区域</SmallButton>
              <SmallButton><TrackIcon />修订<Tri d="down" s={6} /></SmallButton>
            </SmallStack>
          </GroupItems>
          <GroupLabel>更改</GroupLabel>
        </Group>
        <Group $w={104}>
          <GroupItems $left>
            <BigButton $w={53} $off><InkIcon />{"开始\n墨迹书写"}</BigButton>
            <BigButton $w={42}><HideInkIcon />{"隐藏\n墨迹"}</BigButton>
          </GroupItems>
          <GroupLabel>墨迹</GroupLabel>
        </Group>
        <CollapseButton aria-label="折叠功能区"><ChevronUp /></CollapseButton>
      </Ribbon>
      <FormulaRow>
        <Boxed $w={102}>
          <NameInput aria-label="名称框" defaultValue="A19" />
          <NameDrop aria-label="名称列表"><Tri d="down" /></NameDrop>
        </Boxed>
        <Dots><svg width="2" height="11" viewBox="0 0 2 11" fill="#a6a6a6"><path d="M0 0h2v2H0zM0 4h2v2H0zM0 8h2v2H0z" /></svg></Dots>
        <Boxed $w={111}>
          <FxButton aria-label="取消"><svg width="11" height="10" viewBox="0 0 11 10" stroke="#c0c0c0" strokeWidth="2"><path d="m1 0 9 10M10 0 1 10" /></svg></FxButton>
          <FxButton aria-label="输入"><svg width="13" height="10" viewBox="0 0 13 10" fill="none" stroke="#c0c0c0" strokeWidth="2.200"><path d="m1 6 4 3 7-9" /></svg></FxButton>
          <FxButton aria-label="插入函数"><svg width="14" height="16" viewBox="0 0 14 16" fill="#555" fontFamily="Liberation Serif" fontStyle="italic" fontWeight="700"><text x="1" y="12" fontSize="15">f</text><text x="7" y="13" fontSize="11">x</text></svg></FxButton>
        </Boxed>
        <FormulaBox>
          <FormulaInput aria-label="编辑栏" defaultValue="Lena Tan 谭玲丽" />
          <FormulaToggle aria-label="折叠编辑栏"><ChevronUp /></FormulaToggle>
        </FormulaBox>
      </FormulaRow>
      <SheetArea>
        <Sheet />
        <VScroll>
          <ArrowButton aria-label="向上滚动"><Tri d="up" /></ArrowButton>
          <Thumb $grow={592} />
          <Track $grow={127} />
          <ArrowButton aria-label="向下滚动"><Tri d="down" /></ArrowButton>
        </VScroll>
      </SheetArea>
      <SheetTabs>
        <TabArrows><Tri d="left" c="#b8b8b8" /><Tri d="right" c="#b8b8b8" /></TabArrows>
        {months.map((m) => <SheetTab key={m} $wide={m > 9}>{m}月</SheetTab>)}
        <ActiveTab $wide>12月</ActiveTab>
        <AddSheet aria-label="新工作表"><svg width="17" height="17" viewBox="0 0 17 17" fill="none" stroke="#777"><circle cx="8.500" cy="8.500" r="7.500" /><path d="M8.500 4.500v8M4.500 8.500h8" strokeWidth="2" /></svg></AddSheet>
        <Spacer />
        <Dots><svg width="2" height="11" viewBox="0 0 2 11" fill="#a6a6a6"><path d="M0 0h2v2H0zM0 4h2v2H0zM0 8h2v2H0z" /></svg></Dots>
        <HScroll>
          <ArrowButton aria-label="向左滚动"><Tri d="left" /></ArrowButton>
          <Thumb $grow={650} />
          <Track $grow={49} />
          <ArrowButton aria-label="向右滚动"><Tri d="right" /></ArrowButton>
        </HScroll>
      </SheetTabs>
      <StatusBar>
        <span>正在保存 2025 FO Duty Roster (HIEX &amp; HI)。按 Esc 取消。</span>
        <Progress />
        <Stat>平均值: 3823532346</Stat>
        <Stat>计数: 39</Stat>
        <Stat>求和: 19117661732</Stat>
        <ViewButton $on aria-label="普通"><svg width="13" height="13" viewBox="0 0 13 13" fill="none" stroke="#666"><path d="M.5.5h12v12H.5zM4.500 0v13M8.500 0v13M0 3.500h13M0 6.500h13M0 9.500h13" /></svg></ViewButton>
        <ViewButton aria-label="页面布局"><svg width="14" height="13" viewBox="0 0 14 13" fill="none" stroke="#666"><path d="M.5.5h13v12H.5zM3.500 2.500h7v8h-7zM5 4.500h4M5 6.500h4M5 8.500h4" /></svg></ViewButton>
        <ViewButton aria-label="分页预览"><svg width="14" height="13" viewBox="0 0 14 13" fill="none" stroke="#666"><path d="M.5.5h13v12H.5zM4.500 0v7.500M9.500 0v7.500M0 7.500h10" /></svg></ViewButton>
        <ZoomSign aria-label="缩小">−</ZoomSign>
        <ZoomRange type="range" aria-label="缩放" min={0} max={100} defaultValue={39} />
        <ZoomSign aria-label="放大">+</ZoomSign>
        <ZoomLabel>80%</ZoomLabel>
      </StatusBar>
      <Taskbar>
        <Weather>
          <svg width="25" height="17" viewBox="0 0 25 17"><defs><linearGradient id="cl" x1="0" y1="0" x2="0" y2="1"><stop offset="0" stopColor="#8fb0ee" /><stop offset="1" stopColor="#c6d9fb" /></linearGradient></defs><path d="M6 17a5 5 0 0 1-1-10 7 7 0 0 1 13-1 5.500 5.500 0 0 1 1 11z" fill="url(#cl)" /></svg>
          <span>12°C<br />阴</span>
        </Weather>
        <Apps>
          <AppButton aria-label="开始"><Win /></AppButton>
          <Search>
            <svg width="16" height="16" viewBox="0 0 16 16" fill="none" stroke="#222" strokeWidth="1.600"><circle cx="7" cy="6.500" r="5.500" /><path d="m11 11 4 4.500" /></svg>
            <SearchInput type="text" aria-label="搜索" placeholder="搜索" />
            <HatsIcon />
          </Search>
          <AppButton aria-label="任务视图"><TaskViewIcon /></AppButton>
          <AppButton $running aria-label="文件资源管理器"><FolderIcon /></AppButton>
          <AppButton $running aria-label="Edge"><EdgeIcon /></AppButton>
          <AppButton aria-label="Store"><StoreIcon /></AppButton>
          <AppButton $running aria-label="计算器"><CalcIcon /></AppButton>
          <AppButton $running aria-label="微信"><WeChatIcon /></AppButton>
          <AppButton $running aria-label="Chrome"><ChromeIcon /></AppButton>
          <AppButton $running aria-label="财务"><YenIcon /></AppButton>
          <AppButton $front aria-label="Excel"><ExcelIcon /></AppButton>
        </Apps>
        <Tray>
          <TrayButton $w={32} aria-label="显示隐藏的图标"><ChevronUp c="#222" w={1.5} /></TrayButton>
          <TrayButton $w={32} aria-label="更新"><svg width="16" height="16" viewBox="0 0 16 16" fill="none" stroke="#222" strokeWidth="1.400"><path d="M1 7a7 7 0 0 1 12-4l1.500 1.500M14.500 1v4h-4M1 11h4M1.500 15v-4l4 4" /><circle cx="11.500" cy="12" r="4" fill="#0078d4" stroke="none" /></svg></TrayButton>
          <TrayButton $w={32}>中</TrayButton>
          <TrayButton $w={44}>拼</TrayButton>
          <TrayButton $w={32} aria-label="网络"><svg width="16" height="16" viewBox="0 0 16 16" fill="none" stroke="#222" strokeWidth="1.200"><path d="M10 1.500H1v11h12V9M4 15.500h7M6 13v2M9 13v2" /><path d="M11.500 1h4v4h-4zM13.500 5v7" /></svg></TrayButton>
          <TrayButton $w={20} aria-label="音量"><svg width="16" height="14" viewBox="0 0 16 14" fill="none" stroke="#222" strokeWidth="1.200"><path d="M1 5h2l4-3.500v11L3 9H1zM9 5q1.500 2 0 4M11 3q3 4 0 8M13 1.500q4.500 5.500 0 11" /></svg></TrayButton>
          <Clock>14:59<br />2025/12/16</Clock>
        </Tray>
      </Taskbar>
    </Window>
  );
}
